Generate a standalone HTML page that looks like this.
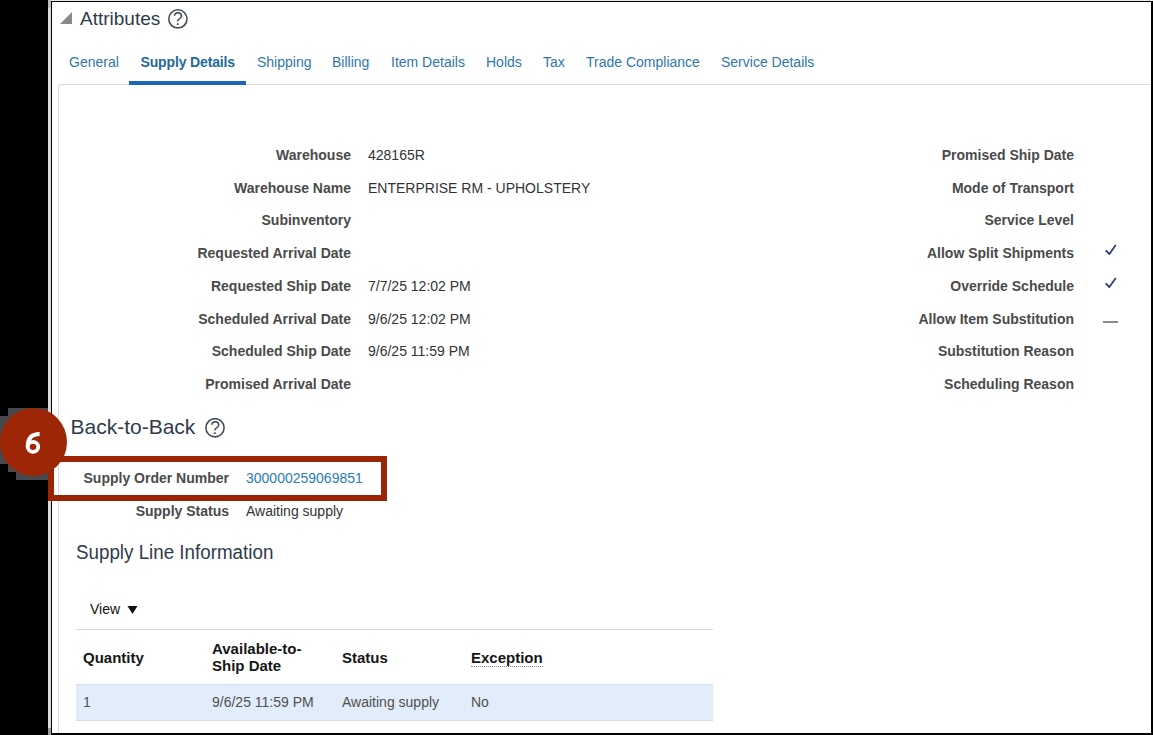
<!DOCTYPE html>
<html><head><meta charset="utf-8">
<style>
html,body{margin:0;padding:0;}
body{width:1153px;height:735px;position:relative;overflow:hidden;background:#000;font-family:"Liberation Sans",sans-serif;}
.a{position:absolute;white-space:nowrap;line-height:1;}
#frame{position:absolute;left:51px;top:1px;width:1100px;height:732px;background:#000;}
#content{position:absolute;left:52px;top:2px;width:1099px;height:731px;background:#fff;overflow:hidden;}
.strip{position:absolute;left:48px;width:3px;}
.lbl{font-size:14px;font-weight:700;color:#4a4a4a;text-align:right;}
.val{font-size:14px;color:#333;}
.tab{font-size:14px;color:#2f78a8;}
.hdr{font-size:15px;font-weight:700;color:#161616;}
</style></head>
<body>
<!-- top light row -->
<div style="position:absolute;left:48px;top:0;width:1105px;height:1px;background:#e8e8e8"></div>
<div class="strip" style="top:0;height:8px;background:#bdbdbd"></div>
<div class="strip" style="top:8px;height:720px;background:#dadada"></div>
<div class="strip" style="top:728px;height:7px;background:#9a9a9a"></div>
<div id="frame"></div>
<div id="content">
</div>
<!-- everything absolute in page coords -->
<div id="page" style="position:absolute;left:0;top:0;width:1153px;height:735px;">
  <!-- Attributes header -->
  <svg class="a" style="left:60px;top:12px" width="13" height="13"><polygon points="12,0 12,12 0,12" fill="#8a8a8a"/></svg>
  <div class="a" style="left:80px;top:9px;font-size:19px;color:#2f3b4c">Attributes</div>
  <svg class="a" style="left:167px;top:9px" width="22" height="22" viewBox="0 0 22 22"><circle cx="10.9" cy="9.9" r="9.1" fill="none" stroke="#454b55" stroke-width="1.6"/><text x="10.9" y="16.2" text-anchor="middle" font-family="Liberation Sans" font-size="17.5" fill="#454b55">?</text></svg>

  <!-- tabs -->
  <div class="a tab" style="left:69px;top:55px">General</div>
  <div class="a tab" style="left:140.5px;top:55px;font-weight:700;color:#1f6a9a;letter-spacing:-0.14px">Supply Details</div>
  <div class="a tab" style="left:257px;top:55px">Shipping</div>
  <div class="a tab" style="left:332px;top:55px">Billing</div>
  <div class="a tab" style="left:391px;top:55px">Item Details</div>
  <div class="a tab" style="left:486px;top:55px">Holds</div>
  <div class="a tab" style="left:543px;top:55px">Tax</div>
  <div class="a tab" style="left:586px;top:55px">Trade Compliance</div>
  <div class="a tab" style="left:721px;top:55px">Service Details</div>

  <!-- panel -->
  <div style="position:absolute;left:58px;top:84px;width:1092px;height:648px;border-left:1px solid #dcdcdc;border-top:1px solid #dcdcdc;border-top-left-radius:3px"></div>
  <div style="position:absolute;left:129px;top:81px;width:117px;height:4px;background:#1a68b5"></div>

  <!-- left form -->
  <div class="a lbl" style="right:802px;top:148px">Warehouse</div>
  <div class="a val" style="left:368px;top:148px">428165R</div>
  <div class="a lbl" style="right:802px;top:181px">Warehouse Name</div>
  <div class="a val" style="left:368px;top:181px">ENTERPRISE RM - UPHOLSTERY</div>
  <div class="a lbl" style="right:802px;top:213px">Subinventory</div>
  <div class="a lbl" style="right:802px;top:246px">Requested Arrival Date</div>
  <div class="a lbl" style="right:802px;top:279px">Requested Ship Date</div>
  <div class="a val" style="left:368px;top:279px">7/7/25 12:02 PM</div>
  <div class="a lbl" style="right:802px;top:312px">Scheduled Arrival Date</div>
  <div class="a val" style="left:368px;top:312px">9/6/25 12:02 PM</div>
  <div class="a lbl" style="right:802px;top:344px">Scheduled Ship Date</div>
  <div class="a val" style="left:368px;top:344px">9/6/25 11:59 PM</div>
  <div class="a lbl" style="right:802px;top:377px">Promised Arrival Date</div>

  <!-- right form -->
  <div class="a lbl" style="right:79px;top:148px">Promised Ship Date</div>
  <div class="a lbl" style="right:79px;top:181px">Mode of Transport</div>
  <div class="a lbl" style="right:79px;top:213px">Service Level</div>
  <div class="a lbl" style="right:79px;top:246px">Allow Split Shipments</div>
  <div class="a lbl" style="right:79px;top:279px">Override Schedule</div>
  <div class="a lbl" style="right:79px;top:312px">Allow Item Substitution</div>
  <div class="a lbl" style="right:79px;top:344px">Substitution Reason</div>
  <div class="a lbl" style="right:79px;top:377px">Scheduling Reason</div>


  <svg class="a" style="left:1103px;top:243px" width="16" height="14"><polyline points="3.2,7.8 6.4,11 12.4,2.6" fill="none" stroke="#333d6e" stroke-width="1.8" stroke-linecap="round" stroke-linejoin="round"/></svg>
  <svg class="a" style="left:1103px;top:276px" width="16" height="14"><polyline points="3.2,7.8 6.4,11 12.4,2.6" fill="none" stroke="#333d6e" stroke-width="1.8" stroke-linecap="round" stroke-linejoin="round"/></svg>
  <div style="position:absolute;left:1103px;top:321px;width:15px;height:2px;background:#8a8a8a"></div>
  <!-- Back-to-back -->
  <div class="a" style="left:70.5px;top:416px;font-size:21px;color:#2f3b4c">Back-to-Back</div>
  <svg class="a" style="left:205px;top:418px" width="22" height="22" viewBox="0 0 22 22"><circle cx="10" cy="9.8" r="9.1" fill="none" stroke="#454b55" stroke-width="1.6"/><text x="10" y="16.3" text-anchor="middle" font-family="Liberation Sans" font-size="17.5" fill="#454b55">?</text></svg>

  <div class="a lbl" style="right:924px;top:471px">Supply Order Number</div>
  <div class="a val" style="left:246px;top:471px;color:#2a7db5">300000259069851</div>
  <div class="a lbl" style="right:924px;top:504px">Supply Status</div>
  <div class="a val" style="left:246px;top:504px">Awaiting supply</div>

  <div class="a" style="left:76px;top:544px;font-size:18.8px;color:#2f3b4c;transform:scaleY(1.06);transform-origin:0 100%">Supply Line Information</div>

  <div class="a val" style="left:90px;top:602px;color:#111">View</div>
  <svg class="a" style="left:127px;top:606px" width="11" height="9"><polygon points="0.5,0 10.5,0 5.5,8" fill="#111"/></svg>

  <!-- table -->
  <div style="position:absolute;left:76px;top:629px;width:637px;height:1px;background:#d8d8d8"></div>
  <div class="a hdr" style="left:83px;top:650px">Quantity</div>
  <div class="a hdr" style="left:212px;top:640px;line-height:17px;white-space:normal">Available-to-<br>Ship Date</div>
  <div class="a hdr" style="left:342px;top:650px">Status</div>
  <div class="a hdr" style="left:471px;top:650px;border-bottom:1px dotted #8a8a8a;padding-bottom:1px">Exception</div>
  <div style="position:absolute;left:76px;top:684px;width:637px;height:35px;background:#e2edfb;border-top:1px solid #d3deec;border-bottom:1px solid #d9dde2"></div>
  <div class="a val" style="left:83px;top:695px;color:#505050">1</div>
  <div class="a val" style="left:212px;top:695px;color:#505050">9/6/25 11:59 PM</div>
  <div class="a val" style="left:342px;top:695px;color:#505050">Awaiting supply</div>
  <div class="a val" style="left:471px;top:695px;color:#505050">No</div>

  <!-- annotation -->
  <div style="position:absolute;left:8px;top:408px;width:40px;height:8px;background:#48484c"></div>
  <div style="position:absolute;left:0px;top:416px;width:48px;height:48px;background:#48484c"></div>
  <div style="position:absolute;left:8px;top:464px;width:40px;height:8px;background:#48484c"></div>
  <div style="position:absolute;left:16px;top:472px;width:32px;height:8px;background:#48484c"></div>

  <div style="position:absolute;left:48px;top:456px;width:327px;height:33px;border:6px solid #9a2404"></div>
  <div style="position:absolute;left:0;top:408px;width:67px;height:68px;border-radius:50%;background:#9c2606"></div>
  <svg class="a" style="left:20px;top:428px" width="26" height="30" viewBox="0 0 26 30"><ellipse cx="13" cy="18.8" rx="5.3" ry="5" fill="none" stroke="#fff" stroke-width="3.8"/><path d="M7.7,18.8 C7.7,10 11.5,6 19.6,6" fill="none" stroke="#fff" stroke-width="4"/></svg>
</div>
</body></html>
